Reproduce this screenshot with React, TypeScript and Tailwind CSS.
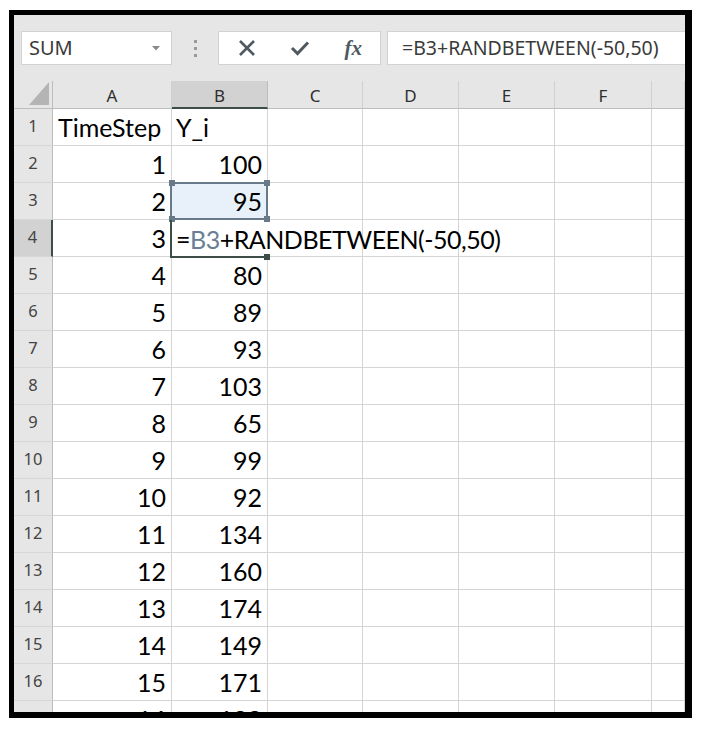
import React from "react";

const cellFont = { fontFamily: "Lato, 'Open Sans', sans-serif" };
const uiFont = { fontFamily: "'Noto Sans', 'Open Sans', sans-serif" };

const rows: [string, string][] = [
  ["TimeStep", "Y_i"],
  ["1", "100"],
  ["2", "95"],
  ["3", ""],
  ["4", "80"],
  ["5", "89"],
  ["6", "93"],
  ["7", "103"],
  ["8", "65"],
  ["9", "99"],
  ["10", "92"],
  ["11", "134"],
  ["12", "160"],
  ["13", "174"],
  ["14", "149"],
  ["15", "171"],
  ["16", "188"],
];

const cols = ["A", "B", "C", "D", "E", "F", ""];

function Toolbar() {
  return (
    <div className="h-[66px] shrink-0 flex items-start pt-[16px] pl-[7px]" style={uiFont}>
      {/* name box */}
      <div className="w-[151px] shrink-0 h-[34px] bg-white border border-[#d2d2d2] flex items-center justify-between pl-[7px] pr-[11px]">
        <span className="text-[20px] text-[#3a3a3a] leading-none">SUM</span>
        <svg width="8" height="5" viewBox="0 0 8 5">
          <polygon points="0,0 8,0 4,4.5" fill="#8a8a8a" />
        </svg>
      </div>
      {/* grip dots */}
      <div className="w-[46px] shrink-0 h-[34px] flex flex-col items-center justify-center gap-[4px]">
        <span className="w-[3px] h-[3px] bg-[#9a9a9a]" />
        <span className="w-[3px] h-[3px] bg-[#9a9a9a]" />
        <span className="w-[3px] h-[3px] bg-[#9a9a9a]" />
      </div>
      {/* cancel / enter / fx */}
      <div className="w-[163px] shrink-0 h-[34px] bg-white border border-[#d2d2d2] flex items-center">
        <div className="w-[54px] flex justify-center pl-[3px]">
          <svg width="18" height="18" viewBox="0 0 18 18">
            <path d="M2 2 L16 16 M16 2 L2 16" stroke="#4f5962" strokeWidth="2.6" />
          </svg>
        </div>
        <div className="w-[54px] flex justify-center">
          <svg width="20" height="16" viewBox="0 0 20 16">
            <path d="M2 8 L7.5 13.5 L18 2.5" stroke="#4f5962" strokeWidth="3" fill="none" />
          </svg>
        </div>
        <div className="w-[54px] flex justify-center">
          <span
            className="text-[21px] italic font-bold text-[#4f5962] leading-none"
            style={{ fontFamily: "'Liberation Serif', serif" }}
          >
            fx
          </span>
        </div>
      </div>
      {/* formula input */}
      <div className="ml-[6px] w-[330px] shrink-0 h-[34px] bg-white border border-[#d2d2d2] flex items-center pl-[14px]">
        <span className="text-[19.5px] text-[#3a3a3a] leading-none whitespace-nowrap">
          =B3+RANDBETWEEN(-50,50)
        </span>
      </div>
    </div>
  );
}

function Sheet() {
  return (
    <div className="grid grid-cols-[39px_119px_96px_95px_96px_96px_97px_1fr] grid-rows-[28px] auto-rows-[37px] bg-white">
      {/* header row */}
      <div className="bg-[#e6e6e6] border-r border-b border-[#bdbdbd] flex items-end justify-end pr-[3px] pb-[3px]">
        <svg width="20" height="23" viewBox="0 0 20 23">
          <polygon points="20,0 20,23 0,23" fill="#b4b4b4" />
        </svg>
      </div>
      {cols.map((c, i) =>
        c === "B" ? (
          <div
            key={i}
            className="bg-[#d2d2d2] border-r border-[#bdbdbd] border-b-2 border-b-[#3d4d47] flex items-center justify-center pt-[3px] text-[17px] text-[#2e2e2e]"
            style={uiFont}
          >
            {c}
          </div>
        ) : (
          <div
            key={i}
            className="bg-[#e6e6e6] border-r border-[#d0d0d0] border-b border-b-[#bdbdbd] flex items-center justify-center pt-[3px] text-[17px] text-[#2e2e2e]"
            style={uiFont}
          >
            {c}
          </div>
        )
      )}

      {rows.map(([a, b], r) => {
        const n = r + 1;
        return (
          <React.Fragment key={n}>
            <div
              className={
                n === 4
                  ? "bg-[#d2d2d2] border-r-2 border-r-[#3d4d47] border-b border-b-[#d6d6d6] flex items-end justify-center pb-[6px] text-[16.5px] text-[#444]"
                  : "bg-[#e6e6e6] border-r border-r-[#bdbdbd] border-b border-b-[#d6d6d6] flex items-end justify-center pb-[6px] text-[16.5px] text-[#444]"
              }
              style={uiFont}
            >
              {n}
            </div>
            <div
              className={
                "border-r border-b border-[#d4d4d4] flex items-end pb-[5px] text-[25px] text-black leading-none " +
                (n === 1 ? "justify-start pl-[5px]" : "justify-end pr-[5px]")
              }
              style={cellFont}
            >
              {a}
            </div>
            {n === 3 ? (
              <div
                className="relative bg-[#e8f0f9] border-r border-b border-[#d4d4d4] flex items-end justify-end pb-[5px] pr-[5px] text-[25px] text-black leading-none"
                style={cellFont}
              >
                {b}
                <div className="absolute left-[-2px] top-[-1px] right-[-1px] bottom-[-1px] border-2 border-[#687a8a]" />
                <span className="absolute left-[-3px] top-[-3px] w-[6px] h-[6px] bg-[#687a8a]" />
                <span className="absolute right-[-3px] top-[-3px] w-[6px] h-[6px] bg-[#687a8a]" />
                <span className="absolute left-[-3px] bottom-[-3px] w-[6px] h-[6px] bg-[#687a8a]" />
                <span className="absolute right-[-3px] bottom-[-3px] w-[6px] h-[6px] bg-[#687a8a]" />
              </div>
            ) : n === 4 ? (
              <div
                className="relative z-10 flex items-end pb-[5px] pl-[4px] text-[25px] tracking-[-0.5px] text-black leading-none whitespace-nowrap"
                style={cellFont}
              >
                <span>=</span>
                <span className="text-[#6a7f95]">B3</span>
                <span>+RANDBETWEEN(-50,50)</span>
                <div className="absolute left-[-2px] top-0 w-[2px] bottom-[-1px] bg-[#3d4d47]" />
                <div className="absolute left-[-2px] right-0 bottom-[-1px] h-[2px] bg-[#3d4d47]" />
                <span className="absolute right-[-2px] bottom-[-3px] w-[6px] h-[6px] bg-[#3d4d47]" />
              </div>
            ) : (
              <div
                className={
                  "border-r border-b border-[#d4d4d4] flex items-end pb-[5px] text-[25px] text-black leading-none " +
                  (n === 1 ? "justify-start pl-[4px]" : "justify-end pr-[5px]")
                }
                style={cellFont}
              >
                {b}
              </div>
            )}
            {[0, 1, 2, 3, 4].map((k) => (
              <div key={k} className="bg-white border-r border-b border-[#d4d4d4]" />
            ))}
          </React.Fragment>
        );
      })}
    </div>
  );
}

export default function App() {
  return (
    <div className="w-[704px] h-[735px] bg-white pt-[10px] pl-[9px]">
      <div className="w-[683px] h-[708px] border-[5px] border-r-[7px] border-b-[6px] border-black bg-[#e6e6e6] overflow-hidden flex flex-col">
        <Toolbar />
        <Sheet />
      </div>
    </div>
  );
}
